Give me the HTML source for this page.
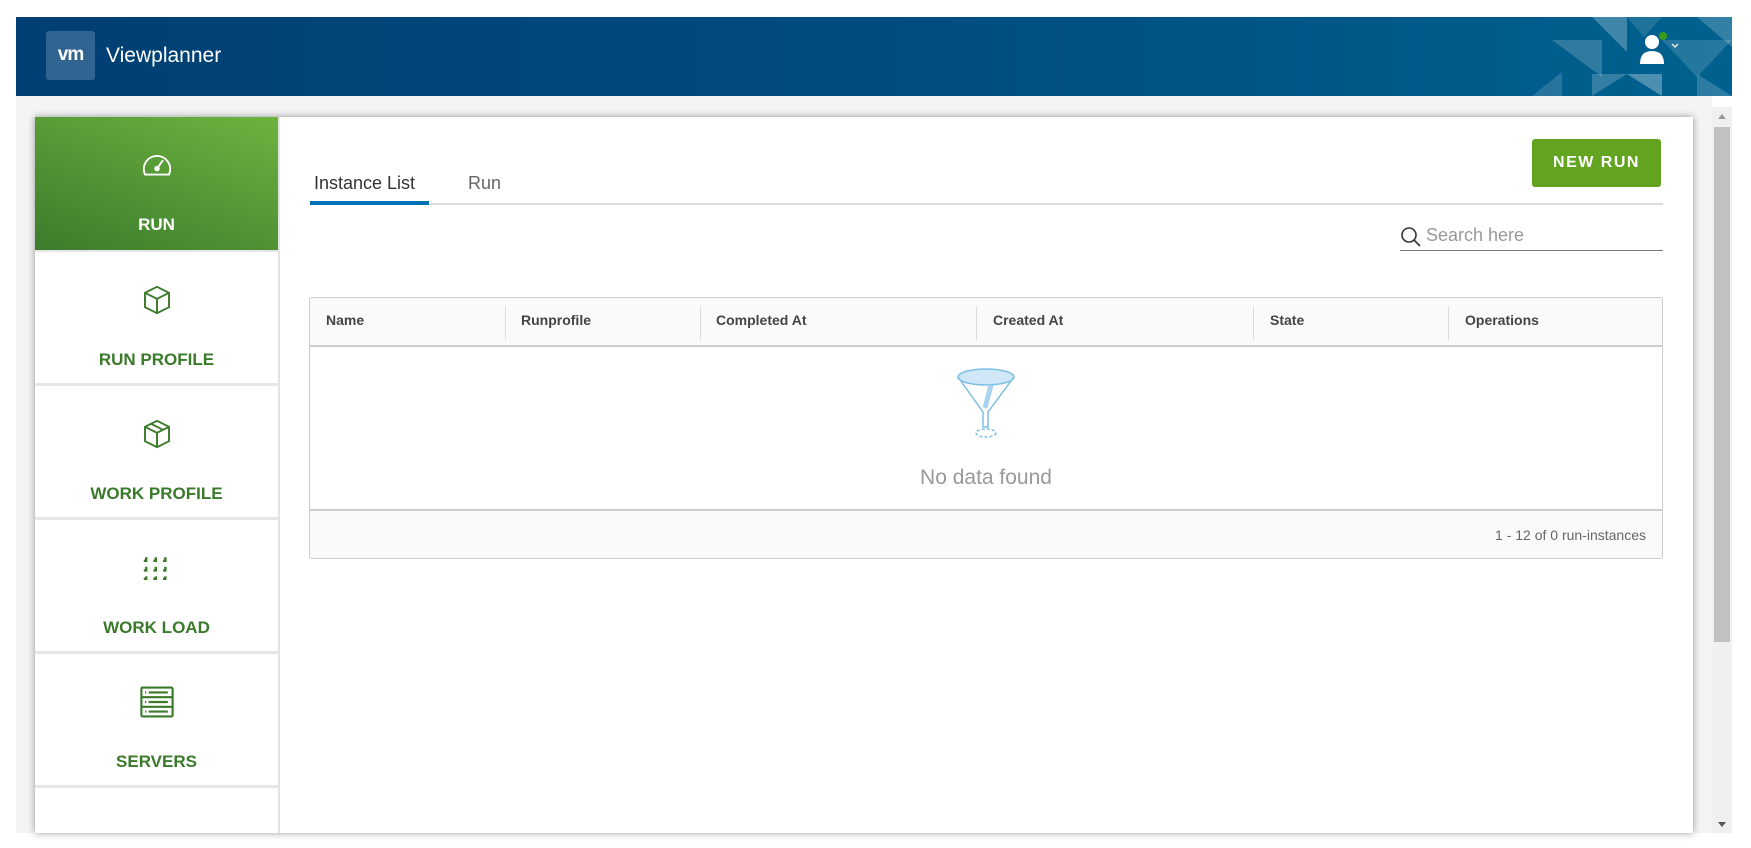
<!DOCTYPE html>
<html><head><style>
*{margin:0;padding:0;box-sizing:border-box}
html,body{width:1751px;height:848px;overflow:hidden}
body{background:#fff;font-family:"Liberation Sans",sans-serif;position:relative}
.hdr{position:absolute;left:16px;top:17px;width:1716px;height:79px;background:linear-gradient(90deg,#003f73 0%,#004c80 50%,#00618f 100%);overflow:hidden}
.logo{position:absolute;left:30px;top:14px;width:49px;height:49px;background:#2f6590;border-radius:3px;color:#fff;font-weight:bold;font-size:19px;text-align:center;line-height:47px;letter-spacing:-1px}
.title{position:absolute;left:90px;top:27px;color:#fff;font-size:21px}
.page{position:absolute;left:16px;top:96px;width:1696px;height:737px;background:#f4f4f4}
.card{position:absolute;left:35px;top:117px;width:1658px;height:716px;background:#fff;box-shadow:0 0 7px rgba(0,0,0,.4)}
.side{position:absolute;left:35px;top:117px;width:245px;height:716px;background:#e6e6e6;overflow:hidden;border-right:2px solid #e3e3e3}
.tile{position:absolute;left:0;width:243px;height:131px;background:#fff;text-align:center;color:#3a7a2a;font-weight:bold;font-size:17px}
.tile svg{position:absolute;left:104px;top:30px}
.tile span{position:absolute;left:0;right:0;top:98px}
.tile.act{background:linear-gradient(20deg,#3b7c2c,#6db33f);color:#fff}
.tab{position:absolute;top:173px;font-size:18px}
.th{position:absolute;top:312px;font-size:14px;color:#444;font-weight:bold}
.div{position:absolute;top:306px;width:1px;height:34px;background:#ddd}
.scroll{position:absolute;left:1712px;top:107px;width:20px;height:726px;background:#f0f0f0}
</style></head><body>
<div class="hdr">
<svg width="200" height="79" style="position:absolute;right:0;top:0">
<polygon points="20,23 70,23 70,60" fill="#fff" opacity=".18"/>
<polygon points="60,0 95,0 95,35" fill="#fff" opacity=".25"/>
<polygon points="95,0 130,0 112,20" fill="#fff" opacity=".12"/>
<polygon points="130,23 200,23 165,60" fill="#fff" opacity=".15"/>
<polygon points="95,57 130,57 130,79" fill="#fff" opacity=".3"/>
<polygon points="60,57 95,57 60,79" fill="#fff" opacity=".2"/>
<polygon points="0,79 30,55 30,79" fill="#fff" opacity=".15"/>
<polygon points="165,0 200,0 200,30" fill="#fff" opacity=".2"/>
<polygon points="165,57 200,79 165,79" fill="#fff" opacity=".18"/>
</svg>
<div class="logo">vm</div><div class="title">Viewplanner</div>
<svg style="position:absolute;left:1624px;top:14px" width="50" height="36"><circle cx="12" cy="11" r="7" fill="#fff"/><path d="M0 33 Q0 20 12 20 Q24 20 24 33Z" fill="#fff"/><circle cx="23" cy="5" r="4" fill="#3a9a1a"/><path d="M32 13 l3 3 3-3" stroke="#fff" fill="none" stroke-width="1.3"/></svg>
</div>
<div class="page"></div>
<div class="card"></div>
<div class="side">
<div class="tile act" style="top:0;height:133px"><svg width="36" height="36" viewBox="0 0 30 30" fill="none" stroke="#fff" stroke-width="1.6"><path d="M5 23 A11 11 0 1 1 25 23 Z"/><path d="M15 18 L20 11"/><circle cx="15" cy="18" r="1.5" fill="#fff"/></svg><span>RUN</span></div>
<div class="tile" style="top:135px"><svg width="36" height="36" viewBox="0 0 30 30" fill="none" stroke="#3a7a2a" stroke-width="1.6"><path d="M15 4 L25 9 L25 21 L15 26 L5 21 L5 9Z M5 9 L15 14 L25 9 M15 14 V26"/></svg><span>RUN PROFILE</span></div>
<div class="tile" style="top:269px"><svg width="36" height="36" viewBox="0 0 30 30" fill="none" stroke="#3a7a2a" stroke-width="1.6"><path d="M15 4 L25 9 L25 21 L15 26 L5 21 L5 9Z M5 9 L15 14 L25 9 M15 14 V26 M10 6.5 L20 11.5"/></svg><span>WORK PROFILE</span></div>
<div class="tile" style="top:403px"><svg width="36" height="36" viewBox="0 0 30 30" fill="none" stroke="#3a7a2a" stroke-width="2"><path d="M6 6v3h-2M14 6v3h-2M22 6v3h-2M6 14v3h-2M14 14v3h-2M22 14v3h-2M6 22v2h-2M14 22v2h-2M22 22v2h-2"/></svg><span>WORK LOAD</span></div>
<div class="tile" style="top:537px"><svg width="36" height="36" viewBox="0 0 30 30" fill="none" stroke="#3a7a2a" stroke-width="1.8"><rect x="2" y="3" width="26" height="24" rx="1"/><path d="M2 11H28M2 19H28M8 7H24M8 15H24M8 23H24M5 7h1M5 15h1M5 23h1"/></svg><span>SERVERS</span></div>
<div class="tile" style="top:671px"><svg width="36" height="36" viewBox="0 0 30 30" fill="none" stroke="#3a7a2a" stroke-width="1.8"><path d="M8 28V20H22V28M5 30H19"/></svg></div>
</div>
<div class="tab" style="left:314px;color:#333">Instance List</div>
<div class="tab" style="left:468px;color:#666">Run</div>
<div style="position:absolute;left:310px;top:203px;width:1353px;height:2px;background:#ddd"></div>
<div style="position:absolute;left:310px;top:201px;width:119px;height:4px;background:#0072b8"></div>
<div style="position:absolute;left:1532px;top:139px;width:129px;height:48px;background:#62a420;border-radius:3px;color:#fff;font-weight:bold;font-size:16px;letter-spacing:1.5px;text-align:center;line-height:48px">NEW RUN</div>
<svg style="position:absolute;left:1400px;top:226px" width="22" height="22" fill="none" stroke="#333" stroke-width="1.6"><circle cx="9" cy="9" r="7"/><path d="M14 14 L20 20"/></svg>
<div style="position:absolute;left:1426px;top:225px;font-size:18px;color:#999">Search here</div>
<div style="position:absolute;left:1400px;top:250px;width:263px;height:1px;background:#777"></div>
<div style="position:absolute;left:309px;top:297px;width:1354px;height:262px;border:1px solid #ccc;border-radius:3px;background:#fafafa"></div>
<div style="position:absolute;left:310px;top:345px;width:1352px;height:166px;background:#fff;border-top:2px solid #ccc;border-bottom:2px solid #ccc"></div>
<div class="th" style="left:326px">Name</div><div class="div" style="left:505px"></div>
<div class="th" style="left:521px">Runprofile</div><div class="div" style="left:700px"></div>
<div class="th" style="left:716px">Completed At</div><div class="div" style="left:976px"></div>
<div class="th" style="left:993px">Created At</div><div class="div" style="left:1253px"></div>
<div class="th" style="left:1270px">State</div><div class="div" style="left:1448px"></div>
<div class="th" style="left:1465px">Operations</div>
<svg style="position:absolute;left:955px;top:368px" width="62" height="72" fill="none" stroke="#7fbfe6" stroke-width="1.5"><ellipse cx="31" cy="9" rx="28" ry="8" fill="#cfe7f6"/><path d="M3 9 L28 44 V59 H33 V44 L59 9"/><path d="M36 17 L30 40" stroke="#a8d4ef" stroke-width="5"/><ellipse cx="31" cy="65" rx="10" ry="4" stroke-dasharray="3 2"/></svg>
<div style="position:absolute;left:786px;width:400px;top:466px;text-align:center;font-size:21px;color:#999">No data found</div>
<div style="position:absolute;right:105px;top:527px;font-size:14px;color:#666">1 - 12 of 0 run-instances</div>
<div class="scroll"><div style="position:absolute;left:2px;top:20px;width:16px;height:515px;background:#c1c1c1"></div>
<div style="position:absolute;left:6px;top:7px;border:4px solid transparent;border-bottom:5px solid #999;border-top:0"></div>
<div style="position:absolute;left:6px;bottom:6px;border:4px solid transparent;border-top:5px solid #555;border-bottom:0"></div></div>
</body></html>
